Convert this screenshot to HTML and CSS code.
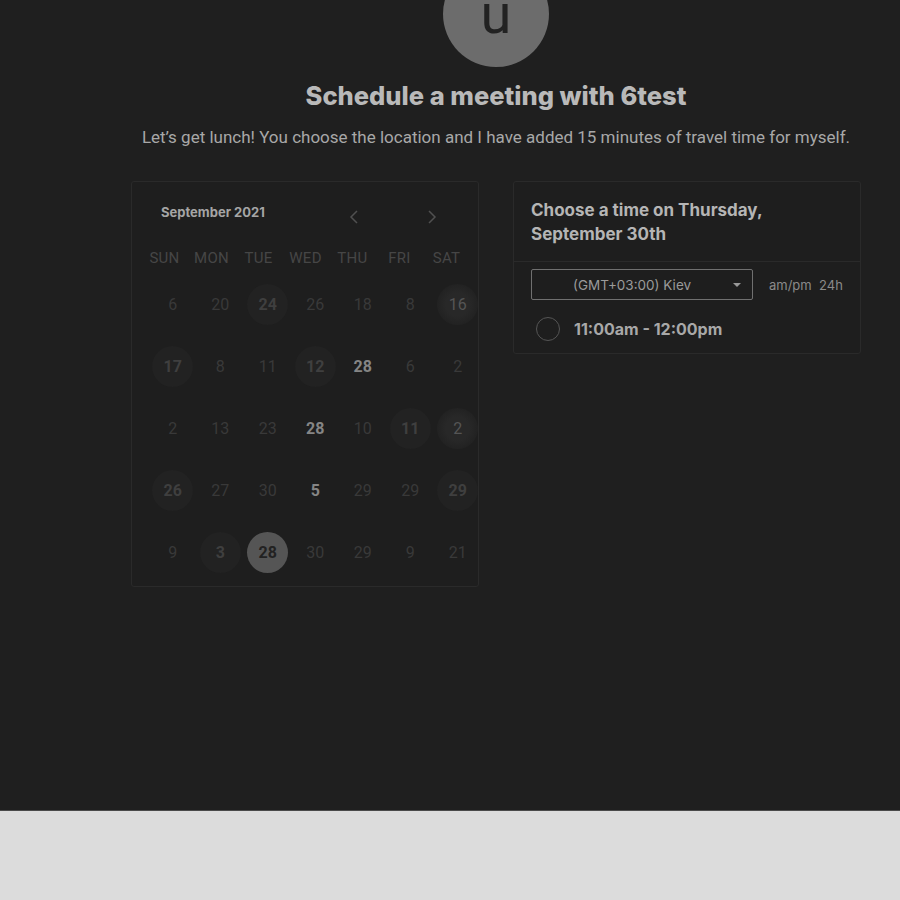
FILE: index.html
```html
<!DOCTYPE html>
<html>
<head>
<meta charset="utf-8">
<link rel="stylesheet" href="styles.css">
</head>
<body>
<div class="main">
  <div class="wrap">
    <div class="avatar">u</div>
    <h1 class="title">Schedule a meeting with 6test</h1>
    <p class="desc">Let’s get lunch! You choose the location and I have added 15 minutes of travel time for myself.</p>
    <div class="cards">
      <div class="card cal">
        <div class="cal-head">
          <span class="month">September 2021</span>
          <span class="nav prev"><svg width="10" height="14" viewBox="0 0 10 14"><path d="M8 1 L2 7 L8 13" fill="none" stroke="#505050" stroke-width="1.5"/></svg></span>
          <span class="nav next"><svg width="10" height="14" viewBox="0 0 10 14"><path d="M2 1 L8 7 L2 13" fill="none" stroke="#505050" stroke-width="1.5"/></svg></span>
        </div>
        <div class="weekdays">
          <span>SUN</span><span>MON</span><span>TUE</span><span>WED</span><span>THU</span><span>FRI</span><span>SAT</span>
        </div>
        <div class="days">
          <span class="d">6</span><span class="d">20</span><span class="d c">24</span><span class="d">26</span><span class="d">18</span><span class="d">8</span><span class="d c dot">16</span>
          <span class="d c">17</span><span class="d">8</span><span class="d">11</span><span class="d c">12</span><span class="d b">28</span><span class="d">6</span><span class="d">2</span>
          <span class="d">2</span><span class="d">13</span><span class="d">23</span><span class="d b">28</span><span class="d">10</span><span class="d c">11</span><span class="d c dot">2</span>
          <span class="d c">26</span><span class="d">27</span><span class="d">30</span><span class="d b">5</span><span class="d">29</span><span class="d">29</span><span class="d c">29</span>
          <span class="d">9</span><span class="d c">3</span><span class="d sel">28</span><span class="d">30</span><span class="d">29</span><span class="d">9</span><span class="d">21</span>
        </div>
      </div>
      <div class="card times">
        <div class="times-head">Choose a time on Thursday,<br>September 30th</div>
        <div class="times-body">
          <div class="tz-row">
            <div class="select"><span>(GMT+03:00) Kiev</span><svg class="caret" width="8" height="5" viewBox="0 0 8 5"><path d="M0 0 H8 L4 4 Z" fill="#999"/></svg></div>
            <span class="fmt">am/pm&nbsp;&nbsp;24h</span>
          </div>
          <div class="slot"><span class="radio"></span><span class="slot-time">11:00am - 12:00pm</span></div>
        </div>
      </div>
    </div>
  </div>
</div>
<div class="footer"></div>
</body>
</html>
```
FILE: styles.css
```css
html, body {
  margin: 0;
  padding: 0;
  background: #dcdcdc;
}
.main {
  height: 810px;
  background: #1f1f1f;
  border-bottom: 1px solid #4a4a4a;
  overflow: hidden;
}
.wrap {
  width: 730px;
  margin-left: 131px;
  display: flex;
  flex-direction: column;
  align-items: center;
}
.avatar {
  width: 106px;
  height: 106px;
  margin-top: -39px;
  border-radius: 50%;
  background: #6c6c6c;
  color: #222;
  font-family: Roboto, sans-serif;
  font-size: 56px;
  line-height: 106px;
  text-align: center;
}
.title {
  margin: 14px 0 0;
  font-family: Inter, sans-serif;
  font-weight: 800;
  font-size: 25.5px;
  line-height: 30px;
  color: #b9b9b9;
}
.desc {
  margin: 16px 0 0;
  font-family: Roboto, sans-serif;
  font-size: 17px;
  line-height: 20px;
  color: #a8a8a8;
  white-space: nowrap;
}
.cards {
  align-self: stretch;
  display: flex;
  gap: 34px;
  margin-top: 34px;
  align-items: flex-start;
}
.card {
  width: 348px;
  box-sizing: border-box;
  border: 1px solid #2a2a2a;
  border-radius: 3px;
  background: #1e1e1e;
}
.cal {
  height: 406px;
}
.cal-head {
  display: flex;
  align-items: center;
  height: 64px;
  padding-left: 29px;
}
.month {
  font-family: Inter, sans-serif;
  font-weight: 700;
  font-size: 13px;
  color: #a5a5a5;
  width: 188px;
  margin-top: -4px;
}
.nav {
  display: flex;
  width: 10px;
  margin-top: 6px;
}
.next { margin-left: 68px; }
.weekdays {
  display: grid;
  grid-template-columns: repeat(7, 47px);
  padding-left: 9px;
  height: 24px;
  align-items: center;
  font-family: Roboto, sans-serif;
  font-size: 15px;
  color: #464646;
  text-align: center;
  letter-spacing: 0.3px;
}
.days {
  display: grid;
  grid-template-columns: repeat(7, 47.5px);
  grid-auto-rows: 62px;
  padding-left: 17px;
  margin-top: 3px;
  font-family: Roboto, sans-serif;
  font-size: 16px;
  color: #393939;
}
.d {
  display: flex;
  align-items: center;
  justify-content: center;
}
.d.c {
  width: 41px;
  height: 41px;
  margin: auto;
  border-radius: 50%;
  background: #222;
  font-weight: 700;
  color: #3f3f3f;
}
.d.dot {
  background: radial-gradient(circle, #282828 0 40%, #222 70%);
  color: #555;
  font-weight: 400;
}
.d.b {
  font-weight: 700;
  color: #858585;
}
.d.sel {
  width: 41px;
  height: 41px;
  margin: auto;
  border-radius: 50%;
  background: #555;
  color: #222;
  font-weight: 700;
}
.times-head {
  font-family: Inter, sans-serif;
  font-weight: 700;
  font-size: 17px;
  line-height: 24px;
  color: #b5b5b5;
  padding: 16px 17px 15px;
  border-bottom: 1px solid #2a2a2a;
}
.times-body {
  padding: 7px 17px 12px;
}
.tz-row {
  display: flex;
  align-items: center;
}
.select {
  width: 222px;
  height: 31px;
  box-sizing: border-box;
  border: 1px solid #707070;
  border-radius: 2px;
  display: flex;
  align-items: center;
  position: relative;
  font-family: Inter, sans-serif;
  font-size: 13.5px;
  color: #9a9a9a;
}
.select span {
  margin-left: 41px;
}
.caret {
  position: absolute;
  right: 11px;
  top: 13px;
}
.fmt {
  margin-left: 16px;
  font-family: Inter, sans-serif;
  font-size: 13px;
  color: #8a8a8a;
}
.slot {
  display: flex;
  align-items: center;
  margin-top: 17px;
}
.radio {
  width: 22px;
  height: 22px;
  border: 1.5px solid #555;
  border-radius: 50%;
  margin-left: 5px;
}
.slot-time {
  margin-left: 14px;
  font-family: Inter, sans-serif;
  font-weight: 700;
  font-size: 16px;
  color: #a8a8a8;
}
.footer {
  height: 89px;
  background: #dcdcdc;
}
```
